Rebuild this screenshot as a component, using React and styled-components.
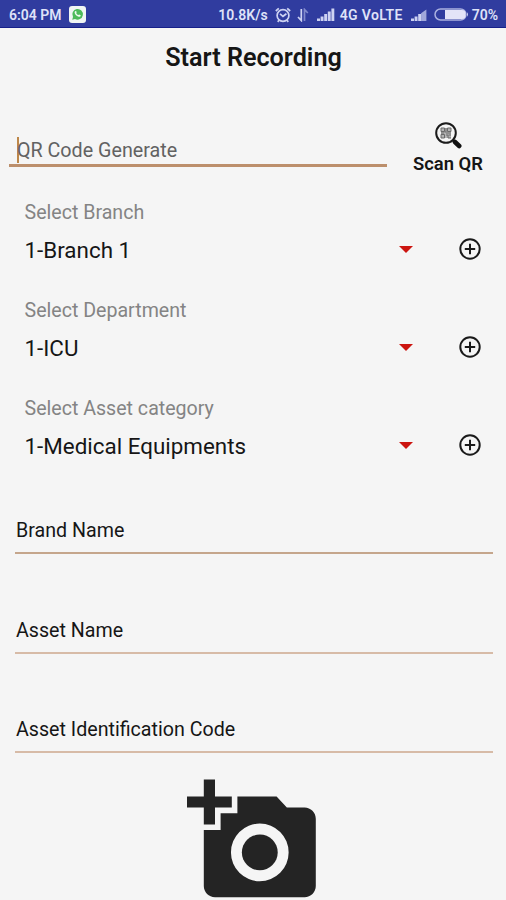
import React from 'react';
import styled, { createGlobalStyle } from 'styled-components';

const GlobalStyle = createGlobalStyle`
  * {
    box-sizing: border-box;
  }
  body {
    margin: 0;
    background-color: #f5f5f5;
    font-family: Roboto, "Liberation Sans", sans-serif;
  }
`;

const Screen = styled.div`
  display: flex;
  flex-direction: column;
  width: 506px;
  height: 900px;
  overflow: hidden;
  background-color: #f5f5f5;
  color: #161616;
`;

const StatusBar = styled.header`
  display: flex;
  justify-content: space-between;
  align-items: center;
  flex: none;
  height: 28px;
  padding: 2px 8px 0 9px;
  background-color: #303c9f;
  border-bottom: 1px solid #16208a;
  color: #dfe2f8;
  font-size: 14px;
  font-weight: 600;
  line-height: 16px;
`;

const StatusGroup = styled.div`
  display: flex;
  align-items: center;
`;

const StatusText = styled.span`
  margin-left: ${({ $gap }) => $gap || 0}px;
  letter-spacing: ${({ $spacing }) => $spacing || 0}px;
  white-space: nowrap;
`;

const StatusIcon = styled.svg`
  display: block;
  flex: none;
  margin-left: ${({ $gap }) => $gap || 0}px;
`;

const Title = styled.h1`
  flex: none;
  margin: 15px 0 0;
  padding-left: 1px;
  font-size: 25.2px;
  font-weight: 600;
  line-height: 30px;
  text-align: center;
`;

const ScanRow = styled.div`
  display: flex;
  flex: none;
  height: 125px;
  padding: 48px 18px 0 9px;
`;

const CodeField = styled.div`
  display: flex;
  align-items: center;
  width: 378px;
  height: 46px;
  padding: 15px 0 0 8px;
  border-bottom: 3px solid #bc8f6c;
`;

const Cursor = styled.span`
  width: 2px;
  height: 26px;
  margin-right: -2px;
  background-color: #bd8749;
`;

const Placeholder = styled.span`
  padding-top: 1px;
  color: #626262;
  font-size: 19.7px;
  line-height: 26px;
`;

const ScanButton = styled.button`
  display: flex;
  flex-direction: column;
  justify-content: flex-start;
  align-items: center;
  flex: 1;
  gap: 4px;
  height: 54px;
  margin-left: 21px;
  padding: 1px 0 0;
  border: 0;
  background: none;
  color: #161616;
  font: 600 18.4px/22px Roboto, "Liberation Sans", sans-serif;
  white-space: nowrap;
`;

const SelectBlock = styled.section`
  flex: none;
  height: 98px;
  padding: 2px 25px 0 24.5px;
`;

const SelectLabel = styled.div`
  color: #848484;
  font-size: 19.6px;
  line-height: 26px;
`;

const SelectRow = styled.div`
  display: flex;
  align-items: center;
  height: 26px;
  margin-top: 10px;
`;

const SelectValue = styled.span`
  flex: 1;
  padding-top: 2px;
  font-size: 22.4px;
  line-height: 26px;
`;

const Caret = styled.span`
  width: 0;
  height: 0;
  border: 7px solid transparent;
  border-top-color: #cc1510;
  border-bottom-width: 0;
`;

const AddIcon = styled.svg`
  display: block;
  margin-left: 46px;
`;

const Fields = styled.div`
  flex: none;
  height: 281.5px;
  padding-top: 2px;
`;

const Field = styled.div`
  height: 99.7px;
  padding: 24px 13px 0 15px;
`;

const FieldText = styled.div`
  height: 36px;
  padding-left: 1px;
  border-bottom: 2px solid ${({ $line }) => $line};
  font-size: 19.65px;
  line-height: 26px;
`;

const Photo = styled.div`
  display: flex;
  flex: none;
  justify-content: center;
  padding-left: 1.5px;
`;

const SELECTS = [
  { label: 'Select Branch', value: '1-Branch 1' },
  { label: 'Select Department', value: '1-ICU' },
  { label: 'Select Asset category', value: '1-Medical Equipments' },
];

const FIELDS = [
  { text: 'Brand Name', line: '#c5a68c' },
  { text: 'Asset Name', line: '#d7bba7' },
  { text: 'Asset Identification Code', line: '#d7bba7' },
];

const WhatsAppIcon = () => (
  <StatusIcon $gap={7} width="17" height="17" viewBox="0 0 17 17">
    <rect width="17" height="17" rx="3" fill="#f0f5f3" />
    <path d="M3.2 13.8l.8-2.9a5.3 5.3 0 1 1 2 2z" fill="#4dbb5a" />
    <path
      d="M6.2 5.3c.7-.6 1.1-.1 1.5 1l-.5.8c.5 1 1.1 1.6 2.1 2l.8-.7 1.6.8c0 1.5-1.4 1.9-2.7 1.3C7.1 9.7 5.6 7.9 5.6 6.5c0-.5.2-.9.6-1.2z"
      fill="#effaf0"
    />
  </StatusIcon>
);

const AlarmIcon = () => (
  <StatusIcon $gap={7} width="16" height="16" viewBox="0 0 16 16" fill="none" stroke="#cdd2f2" strokeWidth="1.7">
    <circle cx="8" cy="8.5" r="5.9" />
    <path d="M.8 4l3-2.7M15.2 4l-3-2.7M4.1 13.2l-1.4 1.7M11.9 13.2l1.4 1.7M5 6.8l3 2.5 3.4-2.5" />
  </StatusIcon>
);

const DataIcon = () => (
  <StatusIcon $gap={6} width="12" height="14" viewBox="0 0 12 14" fill="none" strokeWidth="1.7">
    <path d="M4.3 1v11.5L1 9" stroke="#cdd2f2" />
    <path d="M7.5 13V1.5L10.8 5" stroke="#8089cc" />
  </StatusIcon>
);

const SignalIcon = ({ gap, full }) => (
  <StatusIcon $gap={gap} width="18" height="13" viewBox="0 0 18 13" fill="#cdd2f2">
    {full ? (
      <path d="M0 13v-2.5h3V13zM3.6 13V8.5h2.9V13zM7.2 13V6h2.9v7zM10.8 13V3.5h2.9V13zM14.4 13V.5h2.9V13z" />
    ) : (
      <>
        <path d="M0 13v-2.5h3V13zM3.6 13V8.5h2.9V13zM7.2 13V6h2.9v7z" />
        <path d="M10.1 13V5.2L15.4 1.5V13z" opacity=".72" />
      </>
    )}
  </StatusIcon>
);

const BatteryIcon = () => (
  <StatusIcon $gap={5} width="35" height="13" viewBox="0 0 35 13">
    <rect x="1" y="1" width="31" height="11" rx="5.5" fill="none" stroke="#aab0e0" strokeWidth="1.5" />
    <path d="M11 2h17a3.6 3.6 0 0 1 3.6 4.5A3.6 3.6 0 0 1 28 11H11z" fill="#e3e4f8" />
    <path d="M33 4.3q2 2.2 0 4.4z" fill="#cdd2f2" />
  </StatusIcon>
);

const ScanIcon = () => (
  <svg width="27" height="27" viewBox="0 0 27 27" fill="none">
    <circle cx="11" cy="11" r="9.8" stroke="#1b1b1b" strokeWidth="2" />
    <path d="M17.8 17.8l2.2 2.2" stroke="#1b1b1b" strokeWidth="2.4" />
    <path d="M20 20l4.2 4" stroke="#111" strokeWidth="4.6" strokeLinecap="round" />
    <rect x="6" y="6" width="10" height="10" fill="#b4b4b4" />
    <path
      d="M6 6h3.5v3.5H6zM12.5 6H16v3.5h-3.5zM6 12.5h3.5V16H6zM11 6v4H9.5M11 11h5M11 13h2v3h3M13.5 13H16M6 11h3"
      stroke="#6a6a6a"
    />
  </svg>
);

const PlusCircle = () => (
  <AddIcon width="22" height="22" viewBox="0 0 22 22" fill="none" stroke="#1a1a1a" strokeWidth="2">
    <circle cx="11" cy="11" r="9.7" />
    <path d="M11 5.8v10.4M5.8 11h10.4" />
  </AddIcon>
);

const CameraIcon = () => (
  <svg width="134.4" height="134.4" viewBox="0 0 24 24" fill="#242424">
    <path d="M3 4V1h2v3h3v2H5v3H3V6H0V4z" />
    <path
      fillRule="evenodd"
      d="M6 10V7h3V4h7l1.83 2H21c1.1 0 2 .9 2 2v12c0 1.1-.9 2-2 2H5c-1.1 0-2-.9-2-2V10zM18.15 14a5.15 5.15 0 1 0-10.3 0 5.15 5.15 0 0 0 10.3 0z"
    />
    <circle cx="13" cy="14" r="3.2" />
  </svg>
);

const App = () => {
  return (
    <Screen>
      <GlobalStyle />
      <StatusBar>
        <StatusGroup>
          <StatusText>6:04 PM</StatusText>
          <WhatsAppIcon />
        </StatusGroup>
        <StatusGroup>
          <StatusText>10.8K/s</StatusText>
          <AlarmIcon />
          <DataIcon />
          <SignalIcon gap={8} full />
          <StatusText $gap={5} $spacing={0.35}>4G VoLTE</StatusText>
          <SignalIcon gap={8} />
          <BatteryIcon />
          <StatusText $gap={3}>70%</StatusText>
        </StatusGroup>
      </StatusBar>
      <Title>Start Recording</Title>
      <ScanRow>
        <CodeField>
          <Cursor />
          <Placeholder>QR Code Generate</Placeholder>
        </CodeField>
        <ScanButton>
          <ScanIcon />
          Scan QR
        </ScanButton>
      </ScanRow>
      {SELECTS.map(({ label, value }) => (
        <SelectBlock key={label}>
          <SelectLabel>{label}</SelectLabel>
          <SelectRow>
            <SelectValue>{value}</SelectValue>
            <Caret />
            <PlusCircle />
          </SelectRow>
        </SelectBlock>
      ))}
      <Fields>
        {FIELDS.map(({ text, line }) => (
          <Field key={text}>
            <FieldText $line={line}>{text}</FieldText>
          </Field>
        ))}
      </Fields>
      <Photo>
        <CameraIcon />
      </Photo>
    </Screen>
  );
};

export default App;
